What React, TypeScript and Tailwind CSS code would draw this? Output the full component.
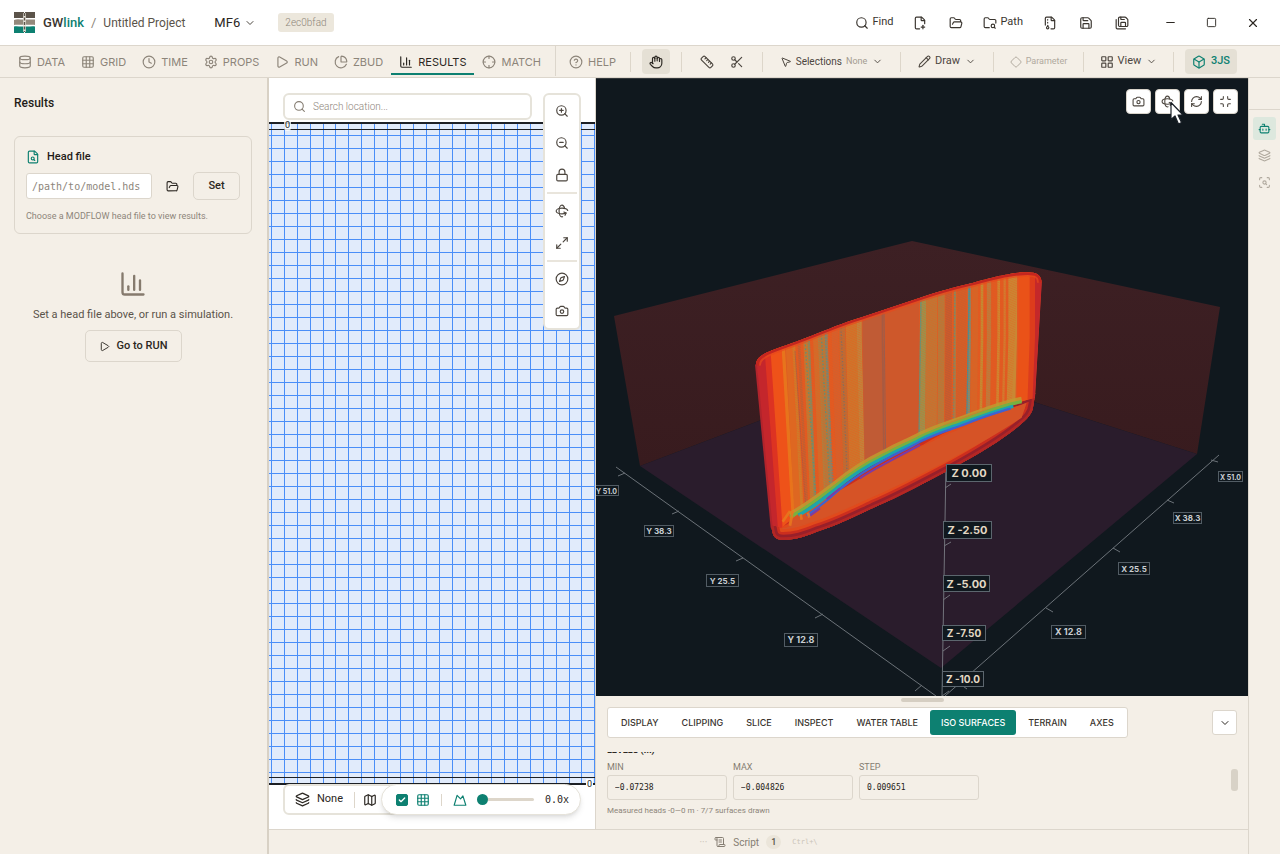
import { useState } from 'react';
import type { ReactNode } from 'react';
import {
  Bot,
  Box,
  Camera,
  ChartColumn,
  ChartPie,
  Check,
  ChevronDown,
  CircleQuestionMark,
  Clock,
  Compass,
  Crosshair,
  Database,
  Diamond,
  FileArchive,
  FilePlusCorner,
  FileSearch,
  FolderOpen,
  FolderSearch,
  Grid3x3,
  Hand,
  Layers,
  LayoutGrid,
  Lock,
  Map as MapIcon,
  Maximize2,
  Minimize,
  Minus,
  MousePointer2,
  Pencil,
  Play,
  RefreshCw,
  Rotate3d,
  Ruler,
  Save,
  SaveAll,
  ScanSearch,
  Scissors,
  ScrollText,
  Search,
  Settings,
  Square,
  X,
  ZoomIn,
  ZoomOut,
} from 'lucide-react';
import type { LucideIcon } from 'lucide-react';

const TABS: { id: string; icon: LucideIcon }[] = [
  { id: 'DATA', icon: Database },
  { id: 'GRID', icon: Grid3x3 },
  { id: 'TIME', icon: Clock },
  { id: 'PROPS', icon: Settings },
  { id: 'RUN', icon: Play },
  { id: 'ZBUD', icon: ChartPie },
  { id: 'RESULTS', icon: ChartColumn },
  { id: 'MATCH', icon: Crosshair },
];

const FILE_ACTIONS: { name: string; icon: LucideIcon; text?: string }[] = [
  { name: 'Find', icon: Search, text: 'Find' },
  { name: 'New project', icon: FilePlusCorner },
  { name: 'Open project', icon: FolderOpen },
  { name: 'Path', icon: FolderSearch, text: 'Path' },
  { name: 'Archive', icon: FileArchive },
  { name: 'Save', icon: Save },
  { name: 'Save as', icon: SaveAll },
];

const MAP_TOOLS: { name: string; icon: LucideIcon }[][] = [
  [
    { name: 'Zoom in', icon: ZoomIn },
    { name: 'Zoom out', icon: ZoomOut },
    { name: 'Lock view', icon: Lock },
  ],
  [
    { name: 'Rotate', icon: Rotate3d },
    { name: 'Fit extent', icon: Maximize2 },
  ],
  [
    { name: 'North up', icon: Compass },
    { name: 'Snapshot', icon: Camera },
  ],
];

const PANEL_TABS = ['DISPLAY', 'CLIPPING', 'SLICE', 'INSPECT', 'WATER TABLE', 'ISO SURFACES', 'TERRAIN', 'AXES'];

const LEVEL_FIELDS = [
  { id: 'min', label: 'MIN', value: '−0.07238' },
  { id: 'max', label: 'MAX', value: '−0.004826' },
  { id: 'step', label: 'STEP', value: '0.009651' },
];

// Vertical strips of the iso wall: [top x, bottom x, width, colour, opacity]
const STRIPS: [number, number, number, string, number][] = [
  [62, 108, 36, '#c4262c', 1],
  [82, 126, 22, '#dd3322', 1],
  [106, 146, 34, '#ee5219', 1],
  [128, 163, 10, '#e97a1c', 0.8],
  [146, 176, 20, '#dd6a22', 0.8],
  [160, 190, 9, '#c48a2c', 0.7],
  [176, 205, 8, '#a9623e', 0.6],
  [197, 222, 15, '#ac8a3e', 0.75],
  [206, 229, 7, '#5f9a78', 0.75],
  [228, 252, 18, '#c9732e', 0.8],
  [246, 268, 24, '#9c8a4a', 0.75],
  [259, 279, 8, '#6f8f78', 0.8],
  [285, 305, 20, '#d06030', 0.8],
  [307, 324, 18, '#a8743f', 0.75],
  [335, 350, 34, '#c48230', 0.75],
  [358, 372, 14, '#b98d42', 0.85],
  [398, 408, 62, '#bb5c38', 0.85],
  [428, 435, 6, '#9b5a48', 0.7],
  [485, 488, 106, '#cc582c', 0.9],
  [549, 545, 18, '#8f9a52', 0.9],
  [575, 571, 34, '#b87c38', 0.85],
  [604, 600, 20, '#a58344', 0.8],
  [626, 622, 20, '#bb5c34', 0.85],
  [645, 641, 7, '#8f8a58', 0.8],
  [665, 659, 28, '#c4602e', 0.7],
  [688, 681, 9, '#6b9480', 0.95],
  [704, 697, 20, '#cf6a2a', 0.7],
  [726, 717, 8, '#b89a38', 0.8],
  [747, 738, 13, '#a98a48', 0.7],
  [776, 765, 8, '#c49a36', 0.7],
  [794, 781, 7, '#c98a34', 0.7],
  [818, 803, 26, '#bf9a3a', 0.7],
  [853, 834, 34, '#ea5218', 1],
  [878, 858, 18, '#dd3c1c', 1],
  [897, 874, 24, '#c4282a', 1],
];

const WALL =
  'M48,342 C46,312 90,300 140,282 C180,268 215,254 250,240 C290,224 320,212 360,200 L540,140 C600,120 650,106 700,95 C760,78 810,66 850,64 C890,62 906,70 905,100 L885,440 L850,450 C720,472 600,520 540,560 C470,588 420,608 360,655 C280,715 190,770 125,830 L95,822 Z';
const FLOOR_RIM =
  'M92,800 C96,850 98,866 130,866 C165,866 190,858 230,842 C290,824 340,798 400,770 C480,736 560,692 640,650 C720,606 780,570 830,530 C866,500 878,488 880,462 L886,425 L840,448 C720,472 600,520 540,560 C470,590 420,610 360,655 C280,715 190,770 130,800 Z';
const TOP_EDGE =
  'M50,345 C46,312 90,300 140,282 C180,268 215,254 250,240 C290,224 320,212 360,200 L540,140 C600,120 650,106 700,95 C760,78 810,66 850,65 C892,62 904,72 904,95';
const ARC = 'M150,800 C185,782 230,750 290,704 C340,662 390,634 435,612 C480,586 500,582 540,560 C590,536 620,528 660,514 C720,492 780,466 845,454';

// Axis tags on the scene: [x, y, width, height, font size, text]
const AXIS_TAGS: [number, number, number, number, number, string][] = [
  [594, 484, 25, 11, 7, 'Y 51.0'],
  [644, 524, 30, 12, 8, 'Y 38.3'],
  [706, 573, 33, 13, 8, 'Y 25.5'],
  [784, 632, 34, 14, 9, 'Y 12.8'],
  [1218, 470, 25, 11, 7, 'X 51.0'],
  [1173, 511, 29, 12, 8, 'X 38.3'],
  [1118, 561, 32, 13, 8, 'X 25.5'],
  [1051, 624, 35, 14, 9, 'X 12.8'],
];

const DEPTH_TAGS: [number, number, number, number, string][] = [
  [946, 463, 46, 18, 'Z 0.00'],
  [943, 520, 49, 18, 'Z -2.50'],
  [943, 574, 47, 17, 'Z -5.00'],
  [942, 624, 44, 16, 'Z -7.50'],
  [942, 670, 42, 16, 'Z -10.0'],
];

function Scene() {
  return (
    <svg viewBox="596 78 652 617" preserveAspectRatio="xMidYMid slice" className="absolute inset-0 h-full w-full" role="img" aria-label="Iso surfaces">
      <defs>
        <clipPath id="wall">
          <path d={WALL} />
        </clipPath>
        <clipPath id="rim">
          <path d={FLOOR_RIM} />
        </clipPath>
        <pattern id="hatch" width="8" height="7" patternUnits="userSpaceOnUse" patternTransform="skewY(24)">
          <rect width="8" height="3" fill="#ea5a1e" />
        </pattern>
        <linearGradient id="backWall" x1="0" y1="0" x2="0" y2="1">
          <stop offset="0" stopColor="#3d2024" />
          <stop offset="1" stopColor="#381b1e" />
        </linearGradient>
        <filter id="soft" x="-5%" y="-20%" width="110%" height="140%">
          <feGaussianBlur stdDeviation="2" />
        </filter>
      </defs>
      <rect x="0" y="0" width="2000" height="1400" fill="#10181e" />

      {/* model box */}
      <path d="M614,315 L912,240 L1220,306 L1197,453 L912,362 L640,465 Z" fill="url(#backWall)" />
      <path d="M640,465 L912,362 L1197,453 L941,667 Z" fill="#2a1c2c" />

      {/* axes */}
      <g stroke="#8a9096" strokeWidth="1" fill="none" opacity="0.75">
        <path d="M616,466 L936,695" />
        <path d="M945,695 L1219,454" />
        <path d="M946,462 L942,695" />
        <path d="M618,475 L625,472 M672,513 L679,510 M736,560 L743,557 M815,617 L823,613 M915,690 L922,684" />
        <path d="M1211,459 L1218,461 M1167,499 L1174,502 M1113,547 L1120,551 M1046,607 L1053,611 M960,683 L967,688" />
        <path d="M945,487 L951,483 M944,545 L951,541 M943,599 L950,594 M943,650 L950,645 M942,695 L949,690" />
      </g>

      {/* iso surface stack */}
      <g transform="translate(740 250) scale(0.33333)">
        <path d={FLOOR_RIM} fill="#d65326" />
        <g clipPath="url(#rim)" fill="none">
          <path d={FLOOR_RIM} stroke="#e04a1c" strokeWidth="62" />
          <path d={FLOOR_RIM} stroke="#cc2e1e" strokeWidth="46" />
          <path d={FLOOR_RIM} stroke="#98202a" strokeWidth="30" />
          <path d={FLOOR_RIM} stroke="#b42624" strokeWidth="14" />
          <path d="M150,800 C280,740 480,590 860,455 L845,500 C760,560 520,690 300,780 C230,812 170,830 145,820 Z" fill="#d65326" />
        </g>
        <g clipPath="url(#wall)">
          <path d={WALL} fill="#df5a22" />
          {STRIPS.map(([top, bottom, width, color, opacity]) => (
            <path key={top} d={`M${top},50 L${top},260 L${bottom},850`} stroke={color} strokeWidth={width} opacity={opacity} fill="none" />
          ))}
          <g strokeWidth="4" opacity="0.85">
            <path d="M195,270 L228,745" stroke="#3d9c8e" strokeDasharray="5 6" />
            <path d="M244,250 L270,720" stroke="#3d9c8e" strokeDasharray="6 5" />
            <path d="M256,250 L280,710" stroke="#4b8f9a" strokeDasharray="4 5" />
            <path d="M165,300 L197,770" stroke="#8a5a58" strokeWidth="2" />
            <path d="M303,230 L322,690" stroke="#74706a" strokeDasharray="5 5" />
            <path d="M432,180 L437,620" stroke="#74626a" strokeWidth="2" />
            <path d="M543,140 L537,570" stroke="#4d9a8a" />
            <path d="M688,100 L680,510" stroke="#2f93a6" />
            <path d="M645,110 L639,530" stroke="#5c8f80" strokeDasharray="5 4" />
          </g>
          <path d="M145,250 L360,180 L376,680 L190,800 Z" fill="url(#hatch)" opacity="0.5" />
          <path d="M540,120 L835,50 L815,470 L536,580 Z" fill="url(#hatch)" opacity="0.4" />
          <path d={TOP_EDGE} fill="none" stroke="#e8481c" strokeWidth="26" opacity="0.7" />
          <path d={TOP_EDGE} fill="none" stroke="#c4261f" strokeWidth="15" />
        </g>
        <g fill="none" filter="url(#soft)">
          <path d={ARC} stroke="#c09a30" strokeWidth="16" transform="translate(0 -9)" opacity="0.85" />
          <path d={ARC} stroke="#78b040" strokeWidth="10" transform="translate(0 -2)" />
          <path d="M175,792 C215,774 250,742 290,712 C340,668 390,640 435,618 C480,594 500,588 540,566 C590,542 620,533 660,519 C720,498 770,478 820,466" stroke="#1fa5ac" strokeWidth="10" />
          <path d="M200,794 C240,766 270,742 300,714 C345,678 390,650 435,626 C480,602 500,594 540,572 C590,548 620,539 660,525 C710,506 760,486 812,473" stroke="#3f62d0" strokeWidth="7" />
          <path d="M205,798 L240,772 M260,744 L300,712 M360,682 C390,660 440,636 540,582" stroke="#7d3ba4" strokeWidth="6" />
        </g>
        <g stroke="#e8791e" strokeWidth="8" opacity="0.85">
          <path d="M128,812 L150,780 M150,824 L158,780 M185,806 L182,790 M208,800 L204,785" />
        </g>
        <path d="M48,340 L95,830" stroke="#b0242c" strokeWidth="6" />
      </g>

      {/* axis tags */}
      <g fontFamily="Inter, sans-serif" fontWeight="700" textAnchor="middle">
        {AXIS_TAGS.map(([x, y, w, h, size, text]) => (
          <g key={text}>
            <rect x={x + 0.5} y={y + 0.5} width={w - 1} height={h - 1} fill="#10181e" stroke="#525c64" />
            <text x={x + w / 2} y={y + h / 2 + 3} fontSize={size} fill="#c9ced2">
              {text}
            </text>
          </g>
        ))}
        {DEPTH_TAGS.map(([x, y, w, h, text]) => (
          <g key={text}>
            <rect x={x + 0.5} y={y + 0.5} width={w - 1} height={h - 1} fill="#10181e" stroke="#5c666e" />
            <text x={x + w / 2} y={y + h / 2 + 4} fontSize={w > 45 ? 11 : 10} fill="#e3d8c4">
              {text}
            </text>
          </g>
        ))}
      </g>
    </svg>
  );
}

const COLS = Array.from({ length: 200 }, (_, i) => Math.round(1.7 + i * 12.95));
const ROWS = Array.from({ length: 120 }, (_, i) => Math.round(13.2 + i * 12.99));

function GridMap() {
  return (
    <div className="absolute inset-x-0 top-[44px] bottom-[44px] overflow-hidden">
      <svg className="h-full w-full" aria-hidden="true">
        <rect width="100%" height="100%" fill="#e1ebfb" />
        <g fill="#4a8ef8">
          {COLS.map((x) => (
            <rect key={x} x={x} y="0" width="1" height="100%" />
          ))}
          {ROWS.map((y) => (
            <rect key={y} x="0" y={y} width="100%" height="1" />
          ))}
        </g>
      </svg>
      <div className="absolute inset-x-0 top-0 h-[8px] border-t-2 border-b border-[#1c1f24]" />
      <div className="absolute inset-x-0 bottom-0 h-[8px] border-t border-b-2 border-[#1c1f24]" />
    </div>
  );
}

function LogoMark() {
  return (
    <svg viewBox="0 0 21 21" className="size-[21px]" aria-hidden="true">
      <path d="M0,0 H10 V6 H0 Z M11,0 H21 V6 H11 Z" fill="#5b5349" />
      <path d="M0,8 C3,6.500 6,7.500 10,7.500 V12.500 C6,13.500 3,12 0,13 Z M11,7.500 H21 V13 C18,12 15,13.500 11,12.500 Z" fill="#94897c" />
      <path d="M0,14.500 C3,13.500 6,15 10,14.500 V21 H0 Z M11,14.500 C15,15 18,13.500 21,14.500 V21 H11 Z" fill="#0d8071" />
      <path d="M10.500,1 V20" stroke="#e9e5dc" strokeWidth="2.600" />
      <path d="M10.500,1 V20" stroke="#5b5349" strokeWidth="1.400" strokeDasharray="3 1.500" />
    </svg>
  );
}

function TerrainIcon() {
  return (
    <svg viewBox="0 0 24 24" className="size-[14px]" fill="none" stroke="currentColor" strokeWidth="2" strokeLinejoin="round" aria-hidden="true">
      <path d="M2,21 L7,4 L13,10 L17,5 L22,21 Z" />
    </svg>
  );
}

function ToolSection({ className, children }: { className: string; children: ReactNode }) {
  return (
    <div className="flex items-center">
      <span className="h-5 w-px bg-[#ddd6ca]" />
      <div className={`flex items-center justify-center ${className}`}>{children}</div>
    </div>
  );
}

export default function App() {
  const [tab, setTab] = useState('RESULTS');
  const [panelTab, setPanelTab] = useState('ISO SURFACES');
  const [showGrid, setShowGrid] = useState(true);
  const [exaggeration, setExaggeration] = useState(0);

  return (
    <div className="flex h-screen flex-col overflow-hidden bg-[#f4efe7] font-[Roboto,sans-serif] text-[11px] text-[#2b2722]">
      {/* Title bar */}
      <header className="flex h-[46px] shrink-0 items-center justify-between border-b border-[#dcd6cc] bg-white pr-[7px] pl-[14px]">
        <div className="flex items-center">
          <LogoMark />
          <span className="ml-2 text-[13px] font-medium text-[#3a352f]">
            GW<span className="text-[#0d8071]">link</span>
          </span>
          <span className="mx-[7px] text-[13px] text-[#8d857a]">/</span>
          <span className="text-[12px] text-[#5a534a]">Untitled Project</span>
          <label className="ml-[29px] flex items-center gap-1">
            <select aria-label="Model engine" className="appearance-none text-[13px] text-[#2b2722] outline-none">
              <option>MF6</option>
            </select>
            <ChevronDown className="pointer-events-none size-3 text-[#4c463f]" />
          </label>
          <span className="ml-[22px] rounded-[3px] bg-[#ece7dc] px-[7px] text-[10px] leading-[19px] font-light text-[#8d857a]">2ec0bfad</span>
        </div>
        <div className="flex items-center">
          {FILE_ACTIONS.map(({ name, icon: Icon, text }) => (
            <button key={name} aria-label={name} className={`flex items-center gap-[3px] text-[#3a352f] ${text ? 'px-[9px]' : 'px-[11px]'}`}>
              <Icon className="size-[14px]" strokeWidth={2} />
              {text && <span>{text}</span>}
            </button>
          ))}
          <div className="ml-[10px] flex items-center">
            <button aria-label="Minimize" className="flex w-[41px] justify-center">
              <Minus className="size-[13px]" strokeWidth={2} />
            </button>
            <button aria-label="Maximize" className="flex w-[41px] justify-center">
              <Square className="size-[11px]" strokeWidth={2} />
            </button>
            <button aria-label="Close" className="flex w-[41px] justify-center">
              <X className="size-[14px]" strokeWidth={2} />
            </button>
          </div>
        </div>
      </header>

      {/* Workflow tabs and tools */}
      <div className="flex h-[32px] shrink-0 items-stretch justify-between border-b border-[#dcd6cc] pr-[32px] pl-[10px]">
        <nav className="flex items-stretch font-[Inter,sans-serif]">
          {TABS.map(({ id, icon: Icon }) => (
            <button
              key={id}
              onClick={() => setTab(id)}
              className={`mb-[2px] flex items-center gap-[5px] border-b-2 px-2 pt-[5px] ${
                tab === id ? 'border-[#0d8071] text-[#2b2722]' : 'border-transparent text-[#8d857a]'
              }`}
            >
              <Icon className="size-[14px]" strokeWidth={2} />
              {id}
            </button>
          ))}
          <button className="mb-px ml-[6px] flex items-center gap-[5px] border-l border-[#dcd6cc] pt-[2px] pl-[13px] text-[#8d857a]">
            <CircleQuestionMark className="size-[14px]" strokeWidth={2} />
            HELP
          </button>
        </nav>
        <div className="flex items-center text-[#4c463f]">
          <ToolSection className="w-[50px]">
            <button aria-label="Pan" className="flex h-[25px] w-[28px] items-center justify-center rounded-[4px] bg-[#e5e0d5] text-[#2b2722]">
              <Hand className="size-[14px]" />
            </button>
          </ToolSection>
          <ToolSection className="w-[80px] gap-4">
            <button aria-label="Measure">
              <Ruler className="size-[14px]" strokeWidth={2} />
            </button>
            <button aria-label="Cut">
              <Scissors className="size-[14px]" strokeWidth={2} />
            </button>
          </ToolSection>
          <ToolSection className="w-[137px]">
            <button className="flex items-center gap-[4px] text-[10px]">
              <MousePointer2 className="size-3" strokeWidth={2} />
              Selections <span className="text-[9px] text-[#a39b90]">None</span>
              <ChevronDown className="ml-px size-[11px]" />
            </button>
          </ToolSection>
          <ToolSection className="w-[92px]">
            <button className="flex items-center gap-[4px]">
              <Pencil className="size-[13px]" strokeWidth={2} />
              Draw
              <ChevronDown className="ml-px size-[11px]" />
            </button>
          </ToolSection>
          <ToolSection className="w-[89px]">
            <button disabled className="flex items-center gap-[4px] text-[9px] text-[#b0a99e]">
              <Diamond className="size-3" strokeWidth={2} />
              Parameter
            </button>
          </ToolSection>
          <ToolSection className="w-[89px]">
            <button className="flex items-center gap-[4px]">
              <LayoutGrid className="size-[14px]" strokeWidth={2} />
              View
              <ChevronDown className="ml-px size-[11px]" />
            </button>
          </ToolSection>
          <ToolSection className="w-[74px]">
            <button className="flex h-[25px] w-[52px] items-center justify-center gap-[5px] rounded-[4px] bg-[#e5e0d5] font-medium text-[#0d8071]">
              <Box className="size-[14px]" strokeWidth={2} />
              3JS
            </button>
          </ToolSection>
        </div>
      </div>

      <div className="flex min-h-0 flex-1">
        {/* Results sidebar */}
        <aside className="w-[269px] shrink-0 border-r-2 border-[#d8d1c5] pr-[15px] pl-[14px]">
          <h2 className="mt-[17px] text-[12px] leading-4 font-medium text-[#1f1c18]">Results</h2>
          <section className="mt-[25px] rounded-[6px] border border-[#dcd6cc] px-[11px] pt-3 pb-[10px]">
            <h3 className="flex items-center gap-[7px] text-[11px] leading-4 font-medium text-[#1f1c18]">
              <FileSearch className="size-[14px] text-[#0d8071]" />
              Head file
            </h3>
            <div className="mt-[7px] flex items-center justify-between">
              <input
                aria-label="Head file"
                placeholder="/path/to/model.hds"
                className="h-[26px] w-[126px] rounded-[3px] border border-[#dcd6cc] bg-white px-[5px] font-['DejaVu_Sans_Mono',monospace] text-[10px] outline-none placeholder:text-[#8d857a]"
              />
              <button aria-label="Browse">
                <FolderOpen className="size-[13px]" strokeWidth={2} />
              </button>
              <button className="h-[28px] w-[47px] rounded-[5px] border border-[#dcd6cc] font-medium">Set</button>
            </div>
            <p className="mt-[9px] text-[9px] leading-[14px] text-[#8d857a]">Choose a MODFLOW head file to view results.</p>
          </section>
          <div className="mt-[36px] flex flex-col items-center">
            <ChartColumn className="size-[28px] text-[#857a6d]" strokeWidth={2} />
            <p className="mt-[9px] text-[11px] leading-4 text-[#5a534a]">Set a head file above, or run a simulation.</p>
            <button className="mt-[7px] flex h-[32px] w-[97px] items-center justify-center gap-[7px] rounded-[5px] border border-[#dcd6cc] font-medium">
              <Play className="size-[11px]" />
              Go to RUN
            </button>
          </div>
        </aside>

        <div className="flex min-w-0 flex-1 flex-col">
          <div className="flex min-h-0 flex-1">
            {/* Map view */}
            <main className="relative w-[327px] shrink-0 border-r border-[#dcd6cc] bg-white">
              <GridMap />
              <span className="absolute top-[41px] left-[15px] rounded-full bg-white/80 px-px text-[9px] leading-[12px] text-[#1c1f24]">0</span>
              <span className="absolute right-[2px] bottom-[40px] bg-white px-px text-[9px] leading-[10px] text-[#1c1f24]">0</span>
              <div className="absolute inset-x-0 top-[15px] flex items-start justify-between pr-[14px] pl-[14px]">
                <label className="mr-[11px] flex h-[27px] flex-1 items-center gap-[7px] rounded-[6px] border-2 border-[#e6e3da] bg-white px-[8px]">
                  <Search className="size-[13px] text-[#857d72]" />
                  <input
                    aria-label="Search location"
                    placeholder="Search location..."
                    className="min-w-0 flex-1 text-[10px] font-light outline-none placeholder:text-[#8d857a]"
                  />
                </label>
                <div className="w-[38px] rounded-[6px] border-2 border-[#e6e3da] bg-white px-[2px]">
                  {MAP_TOOLS.map((group, i) => (
                    <div key={i} className={`flex flex-col items-center pb-px ${i > 0 ? 'border-t-2 border-[#e9e5dc] pt-px' : ''}`}>
                      {group.map(({ name, icon: Icon }) => (
                        <button key={name} aria-label={name} className="flex h-[32px] items-center text-[#4c463f]">
                          <Icon className="size-[14px]" strokeWidth={2} />
                        </button>
                      ))}
                    </div>
                  ))}
                </div>
              </div>
              <div className="absolute bottom-[14px] left-[14px] flex h-[31px] w-[157px] items-center rounded-[6px] border-2 border-[#e6e3da] bg-white pl-[10px] text-[#2b2722]">
                <button className="flex items-center gap-[7px]">
                  <Layers className="size-[15px]" />
                  None
                </button>
                <span className="mr-2 ml-[11px] h-4 w-px bg-[#ddd6ca]" />
                <button aria-label="Basemap">
                  <MapIcon className="size-[14px]" />
                </button>
              </div>
              <div className="absolute right-[14px] bottom-[14px] flex h-[31px] w-[200px] items-center rounded-full border border-[#e6e3da] bg-white pl-[14px] text-[#0d8071] shadow-md">
                <label className="relative flex">
                  <input
                    type="checkbox"
                    aria-label="Show grid"
                    checked={showGrid}
                    onChange={(e) => setShowGrid(e.target.checked)}
                    className="size-[12px] appearance-none rounded-[2px] border border-[#0d8071] bg-white checked:bg-[#0d8071]"
                  />
                  {showGrid && <Check className="pointer-events-none absolute top-[2px] left-[2px] size-2 text-white" strokeWidth={4} />}
                </label>
                <Grid3x3 className="ml-2 size-[14px]" />
                <span className="mx-[11px] h-3 w-px bg-[#ddd6ca]" />
                <TerrainIcon />
                <input
                  type="range"
                  aria-label="Vertical exaggeration"
                  min={0}
                  max={10}
                  step={0.1}
                  value={exaggeration}
                  onChange={(e) => setExaggeration(Number(e.target.value))}
                  className="ml-[10px] h-[3px] w-[57px] appearance-none rounded-full bg-[#ddd6ca] [&::-webkit-slider-thumb]:size-[11px] [&::-webkit-slider-thumb]:appearance-none [&::-webkit-slider-thumb]:rounded-full [&::-webkit-slider-thumb]:bg-[#0d8071]"
                />
                <span className="ml-[11px] font-['DejaVu_Sans_Mono',monospace] text-[10px] text-[#2b2722]">{exaggeration.toFixed(1)}x</span>
              </div>
            </main>

            {/* 3D view */}
            <div className="flex min-w-0 flex-1 flex-col">
              <div className="relative min-h-0 flex-1 overflow-hidden border-t border-[#33383c] bg-[#10181e]">
                <Scene />
                <div className="absolute top-[10px] right-[10px] flex gap-[4px] text-[#4c463f]">
                  {[
                    { name: 'Snapshot', icon: Camera },
                    { name: 'Orbit', icon: Rotate3d },
                    { name: 'Reset view', icon: RefreshCw },
                    { name: 'Exit full view', icon: Minimize },
                  ].map(({ name, icon: Icon }) => (
                    <button key={name} aria-label={`${name} 3D`} className="flex size-[25px] items-center justify-center rounded-[4px] border border-[#d8d3ca] bg-white">
                      <Icon className="size-[13px]" strokeWidth={2} />
                    </button>
                  ))}
                </div>
                <svg viewBox="0 0 14 24" className="absolute top-[22px] right-[64px] h-[25px] w-[14px]" aria-hidden="true">
                  <path d="M1,1 L1,18 L5,14.500 L8.500,22.500 L11.500,21 L8,13.500 L13,13.500 Z" fill="#fff" stroke="#1a2028" strokeWidth="1.200" strokeLinejoin="round" />
                </svg>
              </div>

              {/* Scene controls */}
              <section className="relative h-[133px] shrink-0 px-[11px]">
                <div className="mx-auto mt-[2px] h-[4px] w-[43px] rounded-full bg-[#d5cec2]" />
                <div className="mt-[5px] flex items-center justify-between">
                  <div role="tablist" className="flex gap-px rounded-[3px] border border-[#dcd6cc] bg-white p-[2px]">
                    {PANEL_TABS.map((name) => (
                      <button
                        key={name}
                        role="tab"
                        aria-selected={panelTab === name}
                        onClick={() => setPanelTab(name)}
                        className={`h-[25px] rounded-[3px] px-[11px] font-[Inter,sans-serif] text-[9px] font-medium ${
                          panelTab === name ? 'bg-[#0d8071] text-white' : 'text-[#3a352f]'
                        }`}
                      >
                        {name}
                      </button>
                    ))}
                  </div>
                  <button aria-label="Collapse panel" className="flex size-[25px] items-center justify-center rounded-[3px] border border-[#dcd6cc] bg-white">
                    <ChevronDown className="size-3" />
                  </button>
                </div>
                <div className="mt-[14px] overflow-hidden">
                  <h4 className="-mt-[8px] text-[9px] leading-[12px] font-bold text-[#2b2722]">LEVELS (M)</h4>
                  <div className="mt-[5px] flex gap-[6px]">
                    {LEVEL_FIELDS.map(({ id, label, value }) => (
                      <div key={id} className="flex w-[120px] flex-col">
                        <label htmlFor={id} className="mb-[2px] text-[9px] leading-[12px] text-[#857d72]">
                          {label}
                        </label>
                        <input
                          id={id}
                          defaultValue={value}
                          className="h-[25px] w-full rounded-[3px] border border-[#dcd6cc] px-[7px] font-['DejaVu_Sans_Mono',monospace] text-[8px] text-[#1f1c18] outline-none"
                        />
                      </div>
                    ))}
                  </div>
                  <p className="mt-[5px] text-[8px] leading-[12px] text-[#8d857a]">Measured heads -0—0 m · 7/7 surfaces drawn</p>
                </div>
                <div className="absolute right-[10px] bottom-[38px] h-[22px] w-[7px] rounded-[3px] bg-[#d8d2c7]" />
              </section>
            </div>
          </div>

          {/* Script bar */}
          <footer className="flex h-[25px] shrink-0 items-center justify-center gap-[7px] border-t border-[#dcd6cc] text-[10px] text-[#857d72]">
            <span className="text-[#cbc4b8]">···</span>
            <button className="flex items-center gap-[7px]">
              <ScrollText className="size-3" strokeWidth={2} />
              Script
            </button>
            <span className="rounded-full bg-[#ebe5da] px-[5px] text-[9px] leading-[14px] font-medium text-[#5a534a]">1</span>
            <kbd className="ml-1 font-['DejaVu_Sans_Mono',monospace] text-[7px] text-[#cbc4b8]">Ctrl+\</kbd>
          </footer>
        </div>

        {/* Side rail */}
        <aside className="flex w-[32px] shrink-0 flex-col border-l border-[#dcd6cc]">
          <div className="h-[32px] border-b border-[#dcd6cc]" />
          <div className="flex flex-col items-center gap-1 pt-[7px] text-[#b0a99e]">
            <button aria-label="Assistant" className="flex size-[23px] items-center justify-center rounded-[3px] bg-[#dde8de] text-[#0d8071]">
              <Bot className="size-[13px]" />
            </button>
            <button aria-label="Layers" className="flex size-[23px] items-center justify-center">
              <Layers className="size-[13px]" strokeWidth={2} />
            </button>
            <button aria-label="Inspect region" className="flex size-[23px] items-center justify-center">
              <ScanSearch className="size-[13px]" strokeWidth={2} />
            </button>
          </div>
        </aside>
      </div>
    </div>
  );
}
